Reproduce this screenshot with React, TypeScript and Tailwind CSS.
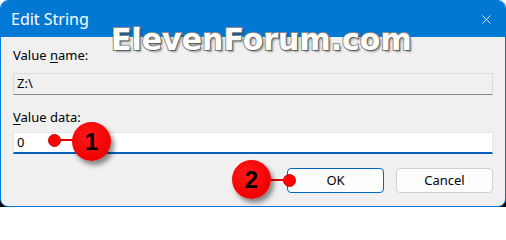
import { X } from 'lucide-react';

const uiFont = "font-['Noto_Sans','Open_Sans',sans-serif]";

const Marker = ({ n, circle, dot, line }: { n: string; circle: string; dot: string; line: string }) => (
  <>
    <div className={`absolute h-[2px] bg-[#e00000] ${line}`} />
    <div className={`absolute w-[13px] h-[13px] rounded-full bg-[#ff0000] border border-[#c80000] ${dot}`} />
    <div
      className={`absolute w-[39px] h-[39px] rounded-full bg-[radial-gradient(circle_at_40%_35%,#ff1a1a_0%,#f00000_70%,#d00000_100%)] shadow-[3px_4px_5px_rgba(0,0,0,0.45)] flex items-center justify-center ${circle}`}
    >
      <span className="font-['Liberation_Sans',Arial,sans-serif] font-bold text-[24px] leading-none text-black">{n}</span>
    </div>
  </>
);

export default function App() {
  return (
    <div className="relative w-[506px] h-[207px] overflow-hidden bg-[linear-gradient(to_bottom,#ffffff_50%,#000000_50%)]">
      <div className={`w-full h-full flex flex-col rounded-[8px] overflow-hidden border border-[#0078d4] bg-[#f0f0f0] ${uiFont}`}>
        {/* Title bar */}
        <div className="h-[36px] shrink-0 bg-[#0078d4] flex items-center justify-between pl-[10px] pr-[11px]">
          <span className="text-white text-[16px] leading-none">Edit String</span>
          <X className="w-[15px] h-[15px] text-white" strokeWidth={1.4} />
        </div>

        {/* Body */}
        <div className="flex-1 flex flex-col px-[12px] pt-[12px] text-[13px] text-black">
          <div className="leading-none h-[15px]">
            Value <span className="underline underline-offset-2">n</span>ame:
          </div>
          <div className="mt-[9px] h-[22px] flex items-center px-[3px] bg-[#f0f0f0] border border-[#dadada] border-b-[#8a8a8a]">
            Z:\
          </div>
          <div className="mt-[16px] leading-none h-[15px]">
            <span className="underline underline-offset-2">V</span>alue data:
          </div>
          <div className="mt-[6px] h-[22px] flex items-center px-[3px] bg-white border border-[#e6e6e6] border-b-2 border-b-[#005fb8]">
            0
          </div>
          <div className="mt-[14px] flex justify-end gap-[12px]">
            <button className="w-[97px] h-[25px] rounded-[4px] bg-[#fdfdfd] border border-[#0067c0] text-[13px]">
              OK
            </button>
            <button className="w-[97px] h-[25px] rounded-[4px] bg-[#fdfdfd] border border-[#d0d0d0] text-[13px]">
              Cancel
            </button>
          </div>
        </div>
      </div>

      {/* Watermark */}
      <div className="absolute left-[111px] top-[25px] font-['DejaVu_Sans',Verdana,sans-serif] font-bold text-[30px] leading-none text-white [-webkit-text-stroke:2px_#8c8c8c] [paint-order:stroke_fill] [text-shadow:2px_2px_2px_rgba(0,0,0,0.35)]">
        ElevenForum.com
      </div>

      {/* Callouts */}
      <Marker n="1" circle="left-[72px] top-[122px]" dot="left-[48px] top-[134px]" line="left-[58px] top-[139px] w-[16px]" />
      <Marker n="2" circle="left-[232px] top-[160px]" dot="left-[283px] top-[174px]" line="left-[268px] top-[179px] w-[17px]" />
    </div>
  );
}
